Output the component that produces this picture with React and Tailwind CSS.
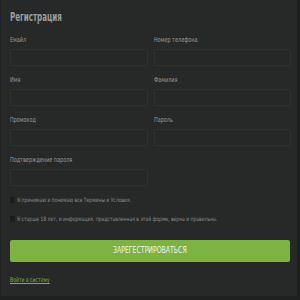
import React from "react";

const font = { fontFamily: '"DejaVu Sans Condensed", Roboto, sans-serif' };

function Field({ label }) {
  return (
    <div className="flex flex-col">
      <div className="text-[7px] leading-[10px] text-[#9a9c9c] h-[10px] whitespace-nowrap">
        <span className="inline-block origin-left scale-x-[0.78]">{label}</span>
      </div>
      <div className="mt-[4px] h-[17px] border border-[#2f3131] bg-[#262828] rounded-[2px]" />
    </div>
  );
}

function Check({ text }) {
  return (
    <div className="flex items-center h-[9px]">
      <div className="w-[5px] h-[6px] bg-[#1b1c1c] shrink-0" />
      <div className="ml-[2px] text-[6px] leading-[9px] text-[#878989] whitespace-nowrap">
        <span className="inline-block origin-left scale-x-[0.83]">{text}</span>
      </div>
    </div>
  );
}

export default function App() {
  return (
    <div className="w-[300px] h-[300px] bg-[#1f2121] overflow-hidden" style={font}>
      <div className="ml-[1px] w-[296px] h-[296px] bg-[#272929] pl-[9px] pr-[6px] pt-[9px]">
        <div className="text-[12px] leading-[17px] font-bold text-[#9a9c9c] whitespace-nowrap">
          <span className="inline-block origin-left scale-x-[0.66]">Регистрация</span>
        </div>
        <div className="mt-[9px] grid grid-cols-2 gap-x-[6px] gap-y-[9px]">
          <Field label="Емайл" />
          <Field label="Номер телефона" />
          <Field label="Имя" />
          <Field label="Фамилия" />
          <Field label="Промокод" />
          <Field label="Пароль" />
          <Field label="Подтверждение пароля" />
        </div>
        <div className="mt-[9px] flex flex-col gap-[10px]">
          <Check text="Я принимаю и понимаю все Термины и Условия." />
          <Check text="Я старше 18 лет, и информация, представленная в этой форме, верна и правильна." />
        </div>
        <button className="mt-[17px] w-[280px] h-[22px] bg-[#7cb342] rounded-[2px] text-[8px] text-[#f2f2f2] flex items-center justify-center">
          <span className="inline-block scale-x-[0.86]">ЗАРЕГЕСТРИРОВАТЬСЯ</span>
        </button>
        <div className="mt-[14px] text-[6.5px] leading-[9px] text-[#7cb342] whitespace-nowrap">
          <span className="inline-block origin-left scale-x-[0.78] underline">Войти в систему</span>
        </div>
      </div>
    </div>
  );
}
